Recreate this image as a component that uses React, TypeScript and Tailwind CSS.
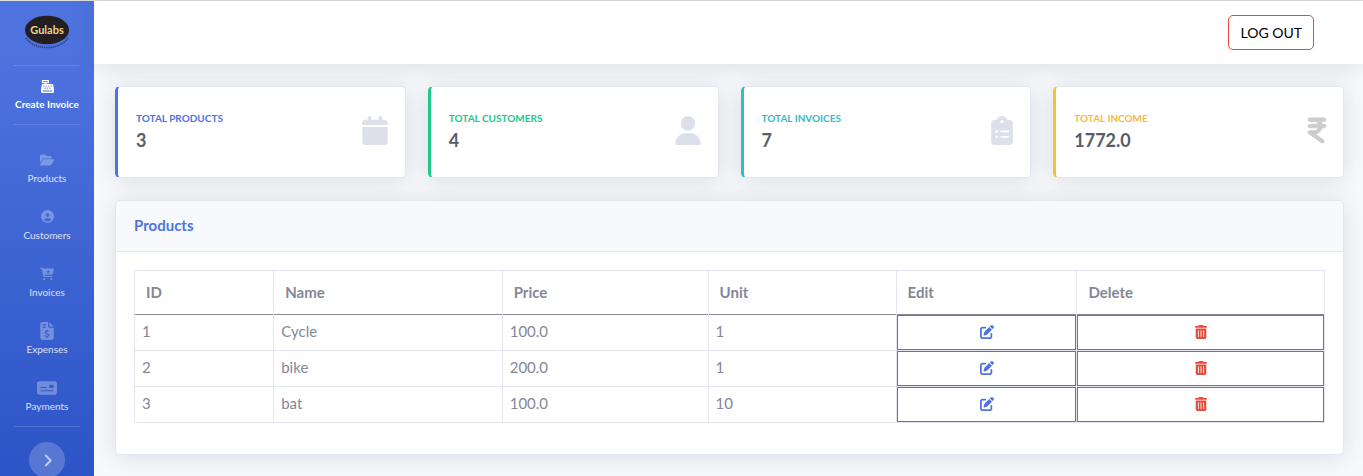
import React from "react";
import {
  FaCalendar,
  FaCartPlus,
  FaCashRegister,
  FaChevronRight,
  FaCircleUser,
  FaClipboardList,
  FaFileInvoiceDollar,
  FaFolderOpen,
  FaIndianRupeeSign,
  FaMoneyCheck,
  FaPenToSquare,
  FaTrashCan,
  FaUser,
} from "react-icons/fa6";

const navItems = [
  { label: "Products", icon: <FaFolderOpen className="size-[14px]" /> },
  { label: "Customers", icon: <FaCircleUser className="size-[13px]" /> },
  { label: "Invoices", icon: <FaCartPlus className="size-[14px]" /> },
  { label: "Expenses", icon: <FaFileInvoiceDollar className="size-[18px]" /> },
  { label: "Payments", icon: <FaMoneyCheck className="size-5" /> },
];

const stats = [
  {
    label: "Total Products",
    value: "3",
    border: "border-l-[#4e73df]",
    text: "text-[#4e73df]",
    icon: <FaCalendar className="h-[29px] w-[26px] text-[#dddfeb]" />,
  },
  {
    label: "Total Customers",
    value: "4",
    border: "border-l-[#1cc88a]",
    text: "text-[#1cc88a]",
    icon: <FaUser className="h-[29px] w-[26px] text-[#dddfeb]" />,
  },
  {
    label: "Total Invoices",
    value: "7",
    border: "border-l-[#36b9cc]",
    text: "text-[#36b9cc]",
    icon: <FaClipboardList className="h-[29px] w-[22px] text-[#dddfeb]" />,
  },
  {
    label: "Total Income",
    value: "1772.0",
    border: "border-l-[#f6c23e]",
    text: "text-[#f6b93e]",
    icon: (
      <FaIndianRupeeSign className="h-[29px] w-[18px] overflow-visible stroke-current stroke-[14px] text-[#cccccc]" />
    ),
  },
];

const products = [
  { id: 1, name: "Cycle", price: "100.0", unit: 1 },
  { id: 2, name: "bike", price: "200.0", unit: 1 },
  { id: 3, name: "bat", price: "100.0", unit: 10 },
];

const columns = [
  { label: "ID", width: "w-[11.7%]" },
  { label: "Name", width: "w-[19.2%]" },
  { label: "Price", width: "w-[17.3%]" },
  { label: "Unit", width: "w-[15.8%]" },
  { label: "Edit", width: "w-[15.2%]" },
  { label: "Delete", width: "w-[20.8%]" },
];

const shadow = "shadow-[0_2px_25px_0_rgba(58,59,69,0.15)]";
const cell = "border border-t-0 border-[#e3e6f0] px-[7px] pb-[2px]";
const action = "flex h-[35px] w-full items-center justify-center border bg-white pb-[2px]";

function Logo() {
  return (
    <svg viewBox="0 0 46 36" className="h-9 w-[46px]" role="img" aria-label="Gulabs">
      <path
        d="M2 23 Q9 32.5 23 32.5 Q37 32.5 44 23"
        fill="none"
        stroke="#34427f"
        strokeWidth="1.6"
        strokeDasharray="1.4 0.7"
      />
      <ellipse cx="23" cy="15" rx="22" ry="14.3" fill="#231f20" />
      <text
        x="23"
        y="18.5"
        textAnchor="middle"
        fontSize="11"
        fontWeight="700"
        fill="#eed48a"
        fontFamily="Lato, sans-serif"
      >
        Gulabs
      </text>
    </svg>
  );
}

function Divider() {
  return <hr className="mx-[14px] border-t border-white/15" />;
}

function Sidebar() {
  return (
    <aside className="w-[94px] shrink-0 bg-linear-to-b from-[#4e73df] from-10% to-[#2c54c6]">
      <a href="#home" className="flex h-16 items-center justify-center">
        <Logo />
      </a>
      <Divider />
      <a
        href="#create"
        className="flex h-[58px] flex-col items-center justify-center gap-1 text-[10px] font-bold whitespace-nowrap text-white"
      >
        <FaCashRegister className="size-[13px]" />
        <span className="leading-[14px]">Create Invoice</span>
      </a>
      <Divider />
      <nav className="flex flex-col pt-[14px] pb-[2px]">
        {navItems.map((item) => (
          <a
            key={item.label}
            href={`#${item.label.toLowerCase()}`}
            className="flex h-[57px] flex-col items-center justify-center gap-[2px] text-[10px] text-white/80"
          >
            <span className="flex h-[18px] items-center text-white/30">{item.icon}</span>
            <span className="leading-[14px]">{item.label}</span>
          </a>
        ))}
      </nav>
      <Divider />
      <div className="flex justify-center pt-[15px]">
        <button
          type="button"
          aria-label="Expand sidebar"
          className="flex size-9 items-center justify-center rounded-full bg-white/20 text-white/60"
        >
          <FaChevronRight className="size-[13px] stroke-current stroke-[20px]" />
        </button>
      </div>
    </aside>
  );
}

export default function App() {
  return (
    <div className="flex min-h-screen border-t border-[#dedede] bg-[#f8f9fc] font-[Lato,'Noto_Sans',sans-serif] text-[#858796]">
      <Sidebar />
      <div className="min-w-0 flex-1">
        <header className={`flex h-[63px] items-center justify-end bg-white pr-[49px] ${shadow}`}>
          <button
            type="button"
            className="h-[35px] rounded-[5px] border border-[#e74a3b] px-[11px] text-sm text-black"
          >
            LOG OUT
          </button>
        </header>
        <main className="pt-[22px] pr-[19px] pl-[21px]">
          <section className="grid grid-cols-4 gap-[22px]">
            {stats.map((s) => (
              <article
                key={s.label}
                className={`flex h-[92px] items-center justify-between rounded-[5px] border border-l-[3px] border-[#e3e6f0] bg-white pr-[17px] pb-1 pl-[18px] ${s.border} ${shadow}`}
              >
                <div className="pt-1">
                  <h2 className={`text-[10px] leading-4 font-bold uppercase ${s.text}`}>
                    {s.label}
                  </h2>
                  <p className="text-lg leading-7 font-bold text-[#5a5c69]">{s.value}</p>
                </div>
                {s.icon}
              </article>
            ))}
          </section>
          <section
            className={`mt-[22px] rounded-[5px] border border-[#e3e6f0] bg-white ${shadow}`}
          >
            <h1 className="rounded-t-[5px] border-b border-[#e3e6f0] bg-[#f8f9fc] px-[18px] pt-[13px] pb-[15px] text-[15px] leading-[22px] font-bold text-[#4e73df]">
              Products
            </h1>
            <div className="px-[18px] pt-[18px] pb-[31px]">
              <table className="w-full table-fixed border-collapse border border-[#e3e6f0] text-[15px]">
                <thead>
                  <tr className="h-11 border-b border-[#858796]">
                    {columns.map((c) => (
                      <th
                        key={c.label}
                        scope="col"
                        className={`border-x border-x-[#e3e6f0] px-[11px] text-left font-bold ${c.width}`}
                      >
                        {c.label}
                      </th>
                    ))}
                  </tr>
                </thead>
                <tbody>
                  {products.map((p) => (
                    <tr key={p.id} className="h-9">
                      <td className={cell}>{p.id}</td>
                      <td className={cell}>{p.name}</td>
                      <td className={cell}>{p.price}</td>
                      <td className={cell}>{p.unit}</td>
                      <td className="border border-t-0 border-[#e3e6f0] p-0">
                        <button
                          type="button"
                          aria-label={`Edit ${p.name}`}
                          className={`${action} border-[#4e73df] text-[#4e73df]`}
                        >
                          <FaPenToSquare className="size-[14px]" />
                        </button>
                      </td>
                      <td className="border border-t-0 border-[#e3e6f0] p-0">
                        <button
                          type="button"
                          aria-label={`Delete ${p.name}`}
                          className={`${action} border-[#e74a3b] text-[#e74a3b]`}
                        >
                          <FaTrashCan className="size-[14px]" />
                        </button>
                      </td>
                    </tr>
                  ))}
                </tbody>
              </table>
            </div>
          </section>
        </main>
      </div>
    </div>
  );
}
